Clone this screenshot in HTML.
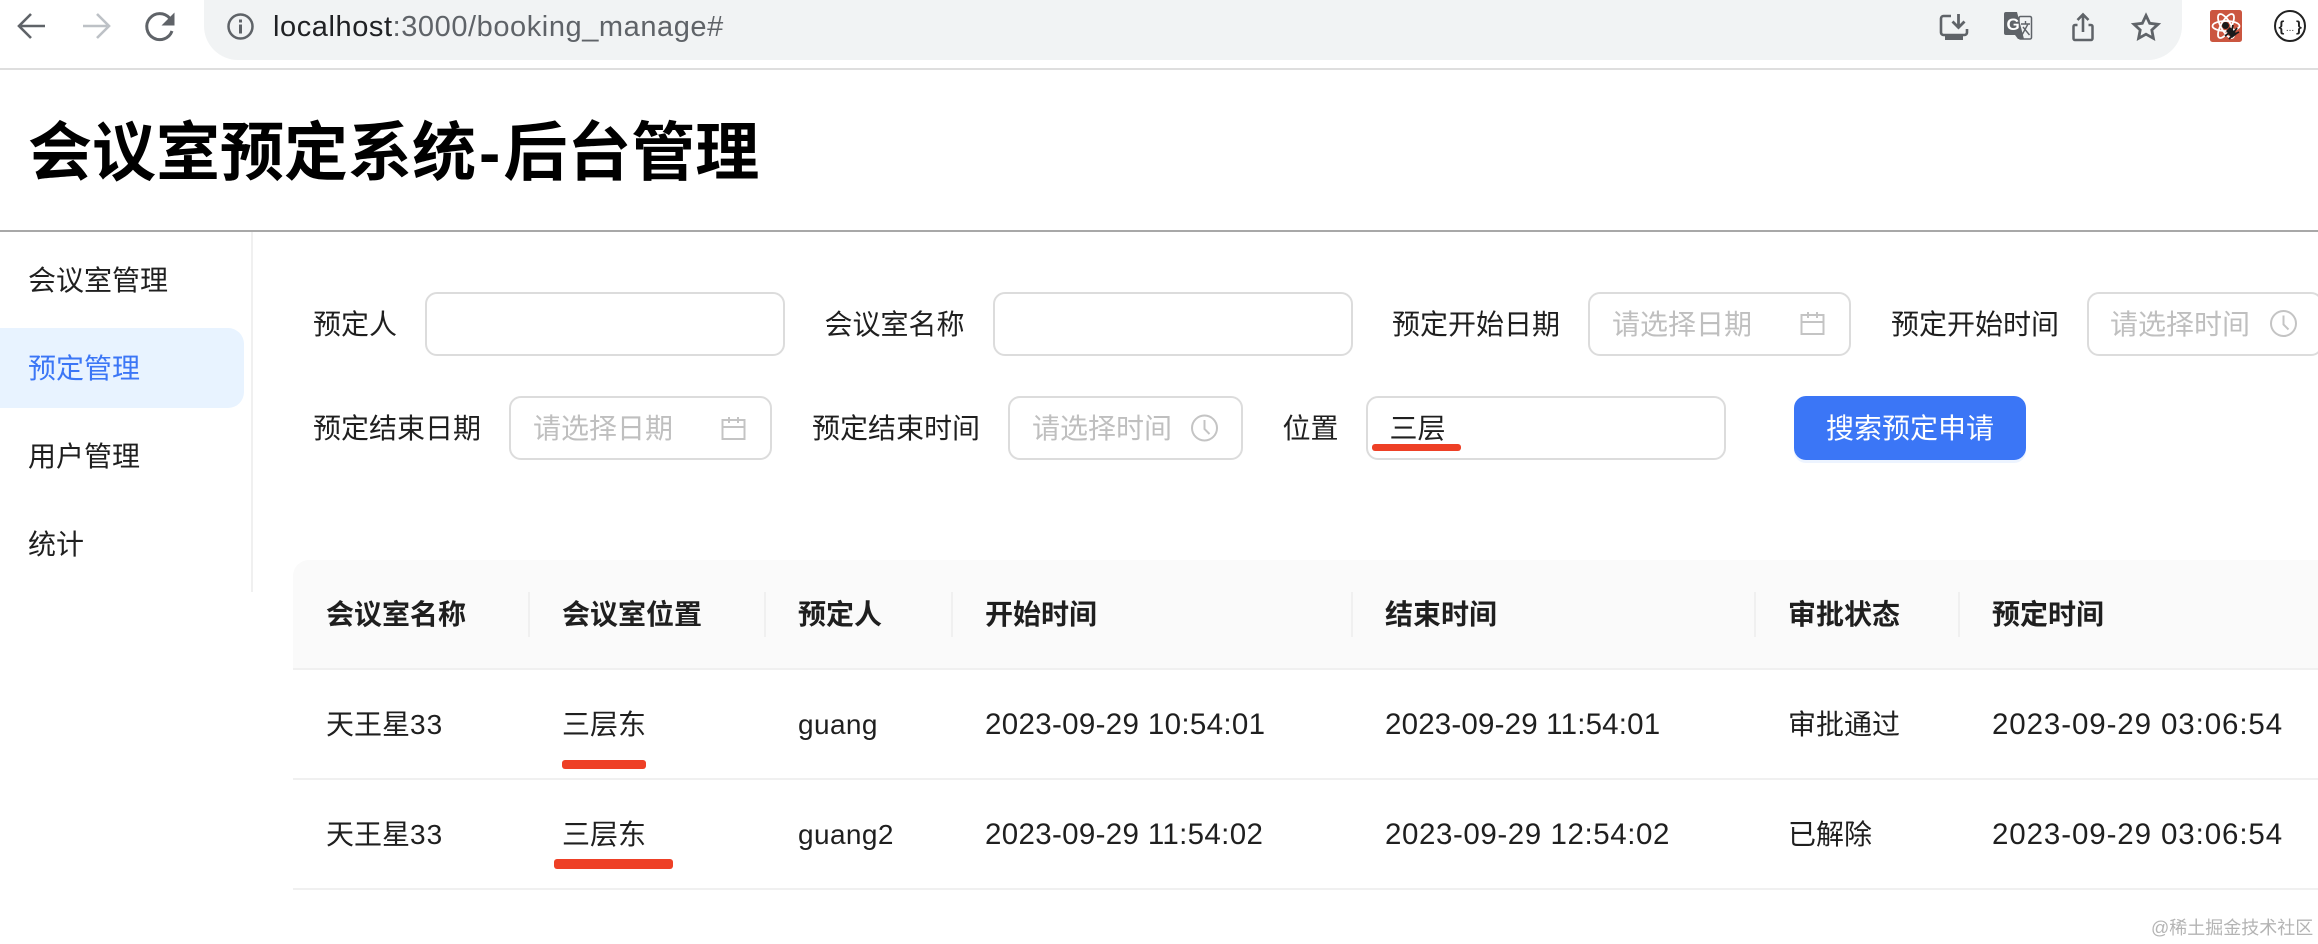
<!DOCTYPE html>
<html lang="zh">
<head>
<meta charset="utf-8">
<title>会议室预定系统</title>
<style>
html,body{margin:0;padding:0;background:#fff;width:2318px;height:944px;overflow:hidden}
body{position:relative;font-family:"Liberation Sans","Noto Sans CJK SC",sans-serif;color:#1f1f1f;font-size:28px}
.a{position:absolute;box-sizing:border-box}
.t{position:absolute;white-space:nowrap;line-height:40px;height:40px;margin:1px 0 0 -1px}
.c{margin-left:0}
.inp{position:absolute;box-sizing:border-box;border:2px solid #dcdcdc;border-radius:12px;background:#fff;height:64px;margin-left:-1px}
.ph{color:#bfbfbf}
.h{font-weight:700;color:#1f1f1f;margin-left:0}
.d{font-size:29.5px;margin-left:0}
.sep{position:absolute;width:2px;top:592px;height:45px;background:#f0f0f0}
.bar{position:absolute;background:#ee4026;border-radius:3px}
svg{position:absolute;left:0;top:0}
</style>
</head>
<body>
<!-- browser chrome -->
<div class="a" style="left:204px;top:-10px;width:1978px;height:70px;background:#f1f3f4;border-radius:0 0 34px 34px"></div>
<div class="a" style="left:0;top:68px;width:2318px;height:2px;background:#dedede"></div>
<div class="t" style="left:274px;top:6px;font-size:29px;letter-spacing:.57px;color:#5f6368"><span style="color:#202124">localhost</span>:3000/booking_manage#</div>

<!-- header -->
<div class="t" style="left:29px;top:112px;line-height:80px;height:80px;font-size:64px;font-weight:700;color:#000">会议室预定系统<span style="margin:0 3px">-</span>后台管理</div>
<div class="a" style="left:0;top:230px;width:2318px;height:2px;background:#a8a8a8"></div>

<!-- sidebar -->
<div class="a" style="left:251px;top:232px;width:2px;height:360px;background:#f0f0f0"></div>
<div class="a" style="left:0;top:328px;width:244px;height:80px;background:#e8f3ff;border-radius:0 16px 16px 0"></div>
<div class="t" style="left:29px;top:260px">会议室管理</div>
<div class="t" style="left:29px;top:348px;color:#3b76f6">预定管理</div>
<div class="t" style="left:29px;top:436px">用户管理</div>
<div class="t" style="left:29px;top:524px">统计</div>

<!-- form row 1 -->
<div class="t" style="left:314px;top:304px">预定人</div>
<div class="inp" style="left:426px;top:292px;width:360px"></div>
<div class="t" style="left:825.500px;top:304px">会议室名称</div>
<div class="inp" style="left:994px;top:292px;width:360px"></div>
<div class="t" style="left:1393px;top:304px">预定开始日期</div>
<div class="inp" style="left:1589px;top:292px;width:263px"></div>
<div class="t ph" style="left:1613px;top:304px">请选择日期</div>
<div class="t" style="left:1892px;top:304px">预定开始时间</div>
<div class="inp" style="left:2088px;top:292px;width:236px"></div>
<div class="t ph" style="left:2111px;top:304px">请选择时间</div>

<!-- form row 2 -->
<div class="t" style="left:314px;top:408px">预定结束日期</div>
<div class="inp" style="left:510px;top:396px;width:263px"></div>
<div class="t ph" style="left:534px;top:408px">请选择日期</div>
<div class="t" style="left:813px;top:408px">预定结束时间</div>
<div class="inp" style="left:1009px;top:396px;width:235px"></div>
<div class="t ph" style="left:1033px;top:408px">请选择时间</div>
<div class="t" style="left:1283.500px;top:408px">位置</div>
<div class="inp" style="left:1367px;top:396px;width:360px"></div>
<div class="t" style="left:1390.500px;top:408px">三层</div>
<div class="bar" style="left:1372px;top:444px;width:89px;height:7px"></div>
<div class="a" style="left:1794px;top:399px;width:232px;height:64px;background:#edf4ff;border-radius:12px"></div>
<div class="a" style="left:1794px;top:396px;width:232px;height:64px;background:#3b76f6;border-radius:12px"></div>
<div class="t" style="left:1827px;top:408px;color:#fff">搜索预定申请</div>

<!-- table -->
<div class="a" style="left:293px;top:560px;width:2025px;height:108px;background:#fafafa;border-radius:16px 0 0 0"></div>
<div class="a" style="left:293px;top:668px;width:2025px;height:2px;background:#f0f0f0"></div>
<div class="a" style="left:293px;top:778px;width:2025px;height:2px;background:#f0f0f0"></div>
<div class="a" style="left:293px;top:888px;width:2025px;height:2px;background:#f0f0f0"></div>
<div class="sep" style="left:528px"></div>
<div class="sep" style="left:764px"></div>
<div class="sep" style="left:951px"></div>
<div class="sep" style="left:1351px"></div>
<div class="sep" style="left:1754px"></div>
<div class="sep" style="left:1958px"></div>

<div class="t h" style="left:326px;top:594px">会议室名称</div>
<div class="t h" style="left:562px;top:594px">会议室位置</div>
<div class="t h" style="left:798px;top:594px">预定人</div>
<div class="t h" style="left:985px;top:594px">开始时间</div>
<div class="t h" style="left:1385px;top:594px">结束时间</div>
<div class="t h" style="left:1788px;top:594px">审批状态</div>
<div class="t h" style="left:1992px;top:594px">预定时间</div>

<div class="t c" style="left:326px;top:704px">天王星<span style="letter-spacing:1px">33</span></div>
<div class="t c" style="left:562px;top:704px">三层东</div>
<div class="t c" style="left:798px;top:704px;letter-spacing:.4px">guang</div>
<div class="t d" style="left:985px;top:704px;letter-spacing:.34px">2023-09-29 10:54:01</div>
<div class="t d" style="left:1385px;top:704px;letter-spacing:.19px">2023-09-29 11:54:01</div>
<div class="t c" style="left:1788px;top:704px">审批通过</div>
<div class="t d" style="left:1992px;top:704px;letter-spacing:.9px">2023-09-29 03:06:54</div>
<div class="bar" style="left:562px;top:760px;width:84px;height:9px"></div>

<div class="t c" style="left:326px;top:814px">天王星<span style="letter-spacing:1px">33</span></div>
<div class="t c" style="left:562px;top:814px">三层东</div>
<div class="t c" style="left:798px;top:814px;letter-spacing:.4px">guang2</div>
<div class="t d" style="left:985px;top:814px;letter-spacing:.34px">2023-09-29 11:54:02</div>
<div class="t d" style="left:1385px;top:814px;letter-spacing:.58px">2023-09-29 12:54:02</div>
<div class="t c" style="left:1788px;top:814px">已解除</div>
<div class="t d" style="left:1992px;top:814px;letter-spacing:.9px">2023-09-29 03:06:54</div>
<div class="bar" style="left:554px;top:859px;width:119px;height:10px"></div>

<div class="t" style="left:2152px;top:907px;font-size:18px;color:#b4b4b4">@稀土掘金技术社区</div>

<!-- icons -->
<svg width="2318" height="944" viewBox="0 0 2318 944" fill="none">
  <!-- nav -->
  <path d="M45 26H21M31 14L19 26L31 38" stroke="#5f6368" stroke-width="2.6"/>
  <path d="M83 26H107M97 14L109 26L97 38" stroke="#bdc1c6" stroke-width="2.6"/>
  <path d="M169.5 18A13 13 0 1 0 172 31" stroke="#5f6368" stroke-width="3"/>
  <path d="M174.500 12.500V25.500H161.500Z" fill="#5f6368"/>
  <!-- info -->
  <circle cx="240.5" cy="26.5" r="12" stroke="#5f6368" stroke-width="2.5"/>
  <rect x="239" y="24.500" width="3" height="9" fill="#5f6368"/>
  <rect x="239" y="19.500" width="3" height="3" fill="#5f6368"/>
  <!-- install -->
  <path d="M1951 16H1943.500A2.500 2.500 0 0 0 1941 18.500V32.500A2.500 2.500 0 0 0 1943.500 35H1964.500A2.500 2.500 0 0 0 1967 32.500V29" stroke="#5f6368" stroke-width="2.6"/>
  <rect x="1945" y="36" width="18" height="4" fill="#5f6368"/>
  <path d="M1958.500 14V27M1952.500 21.500L1958.500 27.500L1964.500 21.500" stroke="#5f6368" stroke-width="2.8"/>
  <!-- translate -->
  <rect x="2019" y="16.500" width="12.500" height="22.500" rx="1.500" stroke="#5f6368" stroke-width="1.500" fill="#f1f3f4"/>
  <path d="M2006 12H2017L2024 39H2018L2015 35H2006A2 2 0 0 1 2004 33V14A2 2 0 0 1 2006 12Z" fill="#5f6368"/>
  <text x="2006.500" y="30" font-family="Liberation Sans" font-size="17" font-weight="700" fill="#fff">G</text>
  <path d="M2021 24H2030M2025.500 21V24M2022 35L2028 24M2023 27L2029.500 35" stroke="#5f6368" stroke-width="1.400"/>
  <!-- share -->
  <path d="M2077.500 25H2075A1.500 1.500 0 0 0 2073.500 26.500V38.500A1.500 1.500 0 0 0 2075 40H2091A1.500 1.500 0 0 0 2092.500 38.500V26.500A1.500 1.500 0 0 0 2091 25H2088.500" stroke="#5f6368" stroke-width="2.500"/>
  <path d="M2083 32V15M2077.500 20L2083 14.500L2088.500 20" stroke="#5f6368" stroke-width="2.600"/>
  <!-- star -->
  <path d="M2146 15.500L2149.700 23.300L2158 24.300L2151.800 30L2153.400 38.300L2146 34.200L2138.600 38.300L2140.200 30L2134 24.300L2142.300 23.300Z" stroke="#5f6368" stroke-width="2.800" stroke-linejoin="miter"/>
  <!-- react devtools -->
  <rect x="2210" y="10" width="32" height="32" rx="2.500" fill="#cb5640"/>
  <g stroke="#fff" stroke-width="1.800">
    <ellipse cx="2226" cy="26" rx="13.500" ry="5"/>
    <ellipse cx="2226" cy="26" rx="13.500" ry="5" transform="rotate(60 2226 26)"/>
    <ellipse cx="2226" cy="26" rx="13.500" ry="5" transform="rotate(120 2226 26)"/>
  </g>
  <circle cx="2225.500" cy="25.500" r="3.500" fill="#1a1a1a"/>
  <path d="M2230 27L2237 34L2232 38L2226 31Z" fill="#1a1a1a"/>
  <path d="M2229 33L2225 36M2232 36L2229 39M2233 25L2232 30M2237 28L2234 32M2239 32L2235 34" stroke="#1a1a1a" stroke-width="1.800"/>
  <!-- json formatter -->
  <circle cx="2290" cy="26" r="15" fill="#fff" stroke="#222" stroke-width="2"/>
  <text x="2278.500" y="31.500" font-family="Liberation Sans" font-size="15" font-weight="700" fill="#222">{</text>
  <text x="2290" y="31" text-anchor="middle" font-family="Liberation Sans" font-size="10" fill="#333">...</text>
  <text x="2296" y="31.500" font-family="Liberation Sans" font-size="15" font-weight="700" fill="#222">}</text>

  <!-- calendars -->
  <g stroke="#c4c4c4" stroke-width="2">
    <path d="M722.500 420H744.500V439H722.500ZM722.500 427H744.500M729 417V423M738 417V423"/>
    <path d="M1801.500 315H1823.500V334H1801.500ZM1801.500 322H1823.500M1808 312V318M1817 312V318"/>
    <!-- clocks -->
    <circle cx="1204.500" cy="428" r="12.500"/>
    <path d="M1204.500 420V429L1209.500 434"/>
    <circle cx="2283.500" cy="323.500" r="12.500"/>
    <path d="M2283.500 315.500V324.500L2288.500 329.500"/>
  </g>
</svg>
</body>
</html>
